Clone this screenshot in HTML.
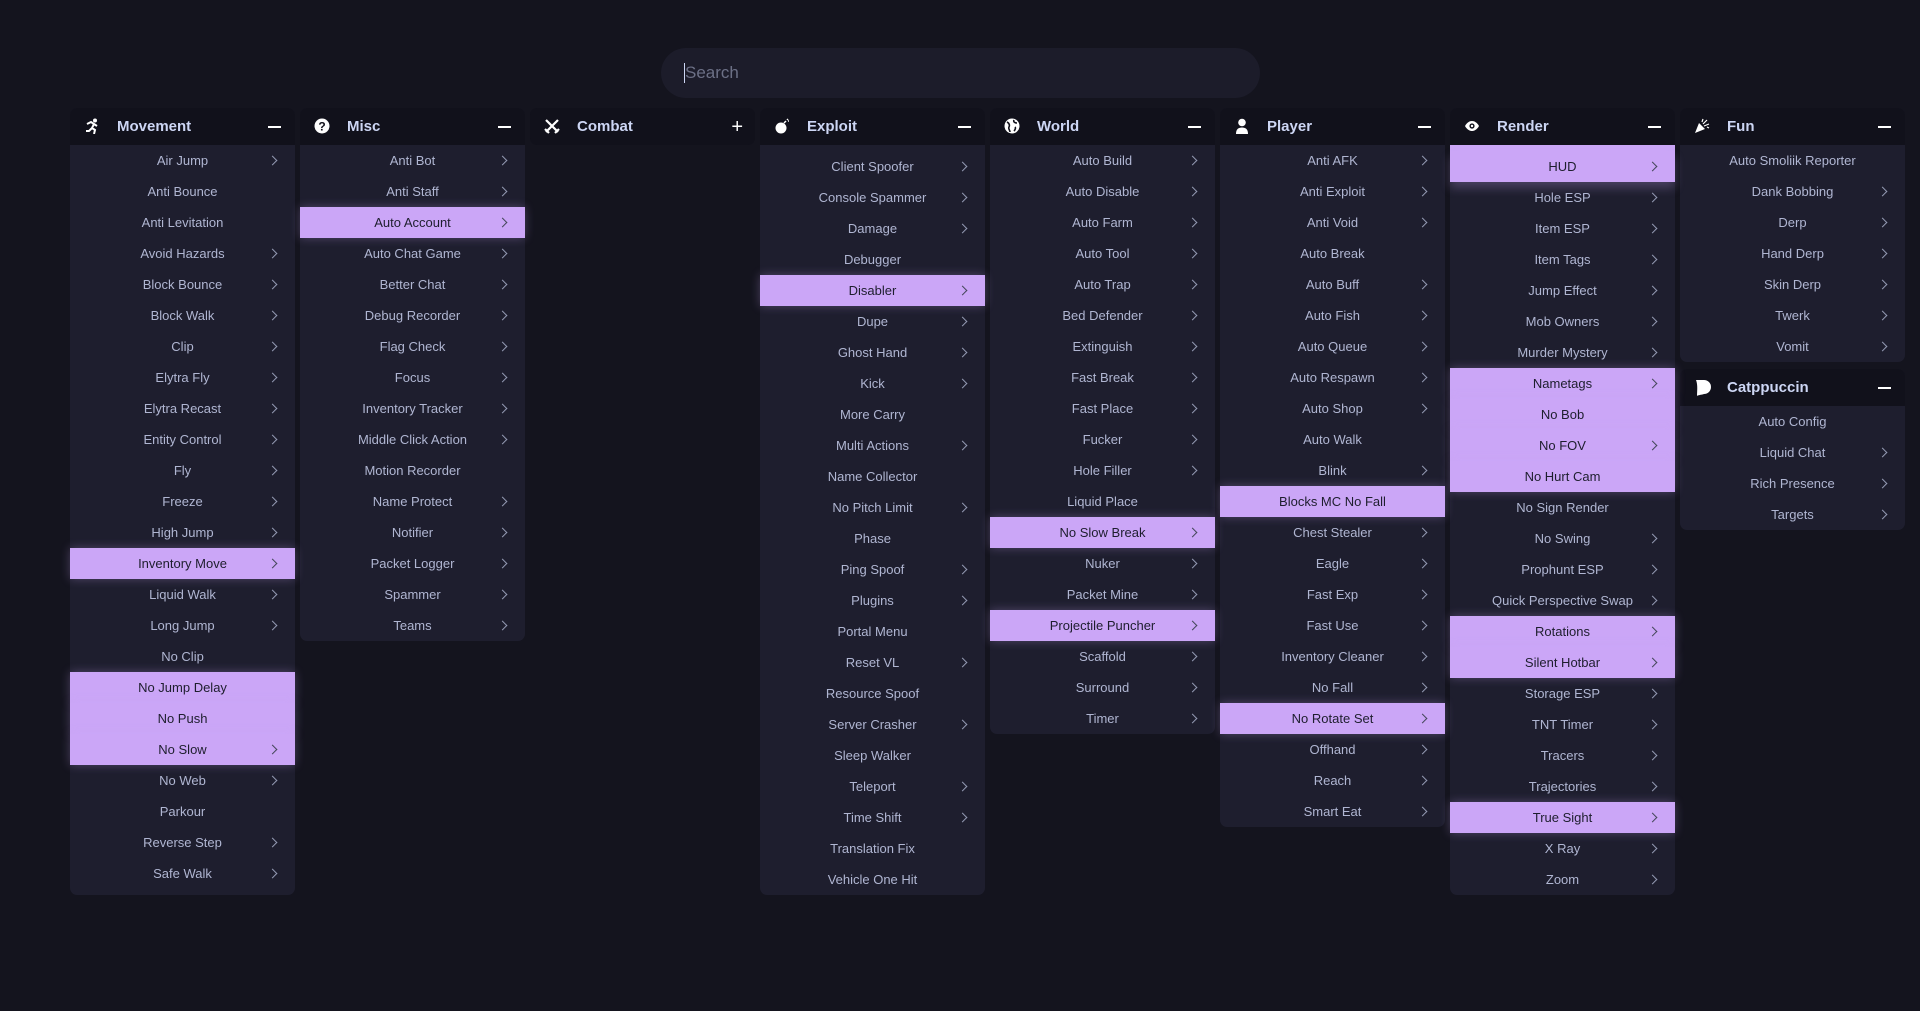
<!DOCTYPE html>
<html><head><meta charset="utf-8"><style>
*{box-sizing:border-box;margin:0;padding:0}
body{width:1920px;height:1011px;overflow:hidden;background:#14141e;font-family:"Liberation Sans",sans-serif;position:relative}
.search{position:absolute;left:661px;top:48px;width:599px;height:50px;border-radius:25px;background:#1c1c2a;color:#6c7086;font-size:17px;line-height:50px;padding-left:24px}
.search:before{content:"";position:absolute;left:23px;top:15px;width:1px;height:20px;background:#cdd6f4}
.p{position:absolute;top:108px;width:225px;border-radius:7px;background:#1e1e2e;overflow:visible}
.hd{height:37px;background:#11111b;border-radius:7px 7px 0 0;position:relative;color:#cdd6f4;font-weight:bold;font-size:15px;line-height:38px;padding-left:47px}
.hd svg{position:absolute;left:14px;top:10px}
.hd .m{position:absolute;right:14px;top:18px;width:13px;height:2px;background:#fff}
.hd .pl{position:absolute;right:12px;top:11px;color:#fff;font-size:20px;line-height:17px;font-weight:normal}
.i{height:31px;line-height:31px;text-align:center;color:#b0b6d2;font-size:13px;position:relative}
.a:after{content:"";position:absolute;right:19px;top:12px;width:6px;height:6px;border-right:1.5px solid #9399b2;border-top:1.5px solid #9399b2;transform:rotate(45deg)}
.h{background:#cba6f7;color:#1e1e2e;z-index:2;box-shadow:0 0 10px rgba(203,166,247,.3)}
.h.a:after{border-color:#45475a}
.pb{padding-bottom:6px}
.sp{height:6px}
.c{border-radius:7px}
.last{border-radius:0 0 7px 7px}
</style></head><body>
<div class="search">Search</div>

<div class="p pb" style="left:70px">
<div class="hd"><svg width="16" height="16" viewBox="0 0 16 16"><circle cx="11" cy="2.5" r="2" fill="#fff"/><path d="M3 6l4-2 3 2-2 4 3 2-1 4M8 10l-3 3-3 0M10 6l3 2" stroke="#fff" stroke-width="2" fill="none"/></svg>Movement<span class="m"></span></div>
<div class="i a">Air Jump</div><div class="i">Anti Bounce</div><div class="i">Anti Levitation</div><div class="i a">Avoid Hazards</div><div class="i a">Block Bounce</div><div class="i a">Block Walk</div><div class="i a">Clip</div><div class="i a">Elytra Fly</div><div class="i a">Elytra Recast</div><div class="i a">Entity Control</div><div class="i a">Fly</div><div class="i a">Freeze</div><div class="i a">High Jump</div><div class="i a h">Inventory Move</div><div class="i a">Liquid Walk</div><div class="i a">Long Jump</div><div class="i">No Clip</div><div class="i h">No Jump Delay</div><div class="i h">No Push</div><div class="i a h">No Slow</div><div class="i a">No Web</div><div class="i">Parkour</div><div class="i a">Reverse Step</div><div class="i a">Safe Walk</div>
</div>

<div class="p" style="left:300px">
<div class="hd"><svg width="16" height="16" viewBox="0 0 16 16"><circle cx="8" cy="8" r="7.5" fill="#fff"/><text x="8" y="12.5" text-anchor="middle" font-size="12" font-weight="bold" fill="#11111b" font-family="Liberation Sans">?</text></svg>Misc<span class="m"></span></div>
<div class="i a">Anti Bot</div><div class="i a">Anti Staff</div><div class="i a h">Auto Account</div><div class="i a">Auto Chat Game</div><div class="i a">Better Chat</div><div class="i a">Debug Recorder</div><div class="i a">Flag Check</div><div class="i a">Focus</div><div class="i a">Inventory Tracker</div><div class="i a">Middle Click Action</div><div class="i">Motion Recorder</div><div class="i a">Name Protect</div><div class="i a">Notifier</div><div class="i a">Packet Logger</div><div class="i a">Spammer</div><div class="i a last">Teams</div>
</div>

<div class="p" style="left:530px;background:none">
<div class="hd c"><svg width="16" height="16" viewBox="0 0 16 16"><path d="M2 2l12 12M14 2L2 14M1 11l4 4M15 11l-4 4" stroke="#fff" stroke-width="2.2" fill="none"/></svg>Combat<span class="pl">+</span></div>
</div>

<div class="p" style="left:760px">
<div class="hd"><svg width="16" height="16" viewBox="0 0 16 16"><circle cx="7" cy="10" r="5.5" fill="#fff"/><path d="M10 5l2-2M13 1l1 1M14 3l1 0" stroke="#fff" stroke-width="1.5"/></svg>Exploit<span class="m"></span></div>
<div class="sp"></div>
<div class="i a">Client Spoofer</div><div class="i a">Console Spammer</div><div class="i a">Damage</div><div class="i">Debugger</div><div class="i a h">Disabler</div><div class="i a">Dupe</div><div class="i a">Ghost Hand</div><div class="i a">Kick</div><div class="i">More Carry</div><div class="i a">Multi Actions</div><div class="i">Name Collector</div><div class="i a">No Pitch Limit</div><div class="i">Phase</div><div class="i a">Ping Spoof</div><div class="i a">Plugins</div><div class="i">Portal Menu</div><div class="i a">Reset VL</div><div class="i">Resource Spoof</div><div class="i a">Server Crasher</div><div class="i">Sleep Walker</div><div class="i a">Teleport</div><div class="i a">Time Shift</div><div class="i">Translation Fix</div><div class="i last">Vehicle One Hit</div>
</div>

<div class="p" style="left:990px">
<div class="hd"><svg width="16" height="16" viewBox="0 0 16 16"><circle cx="8" cy="8" r="7.5" fill="#fff"/><path d="M3 4c2 1 3 3 2 5s1 3 1 5M10 2c-1 2 1 3 3 3M11 9c1 1 0 3-1 4" stroke="#11111b" stroke-width="1.6" fill="none"/></svg>World<span class="m"></span></div>
<div class="i a">Auto Build</div><div class="i a">Auto Disable</div><div class="i a">Auto Farm</div><div class="i a">Auto Tool</div><div class="i a">Auto Trap</div><div class="i a">Bed Defender</div><div class="i a">Extinguish</div><div class="i a">Fast Break</div><div class="i a">Fast Place</div><div class="i a">Fucker</div><div class="i a">Hole Filler</div><div class="i">Liquid Place</div><div class="i a h">No Slow Break</div><div class="i a">Nuker</div><div class="i a">Packet Mine</div><div class="i a h">Projectile Puncher</div><div class="i a">Scaffold</div><div class="i a">Surround</div><div class="i a last">Timer</div>
</div>

<div class="p" style="left:1220px">
<div class="hd"><svg width="16" height="16" viewBox="0 0 16 16"><circle cx="8" cy="4.5" r="3.8" fill="#fff"/><path d="M2 16c0-5 2.5-6.5 6-6.5s6 1.5 6 6.5z" fill="#fff"/></svg>Player<span class="m"></span></div>
<div class="i a">Anti AFK</div><div class="i a">Anti Exploit</div><div class="i a">Anti Void</div><div class="i">Auto Break</div><div class="i a">Auto Buff</div><div class="i a">Auto Fish</div><div class="i a">Auto Queue</div><div class="i a">Auto Respawn</div><div class="i a">Auto Shop</div><div class="i">Auto Walk</div><div class="i a">Blink</div><div class="i h">Blocks MC No Fall</div><div class="i a">Chest Stealer</div><div class="i a">Eagle</div><div class="i a">Fast Exp</div><div class="i a">Fast Use</div><div class="i a">Inventory Cleaner</div><div class="i a">No Fall</div><div class="i a h">No Rotate Set</div><div class="i a">Offhand</div><div class="i a">Reach</div><div class="i a last">Smart Eat</div>
</div>

<div class="p" style="left:1450px">
<div class="hd"><svg width="16" height="16" viewBox="0 0 16 16"><path d="M1 8c2-3.5 4.5-5 7-5s5 1.5 7 5c-2 3.5-4.5 5-7 5S3 11.5 1 8z" fill="#fff"/><circle cx="8" cy="8" r="2.6" fill="#11111b"/><circle cx="8" cy="8" r="1.2" fill="#fff"/></svg>Render<span class="m"></span></div>
<div class="sp" style="background:#cba6f7"></div>
<div class="i a h" style="box-shadow:0 6px 10px rgba(203,166,247,.25)">HUD</div><div class="i a">Hole ESP</div><div class="i a">Item ESP</div><div class="i a">Item Tags</div><div class="i a">Jump Effect</div><div class="i a">Mob Owners</div><div class="i a">Murder Mystery</div><div class="i a h">Nametags</div><div class="i h">No Bob</div><div class="i a h">No FOV</div><div class="i h">No Hurt Cam</div><div class="i">No Sign Render</div><div class="i a">No Swing</div><div class="i a">Prophunt ESP</div><div class="i a">Quick Perspective Swap</div><div class="i a h">Rotations</div><div class="i a h">Silent Hotbar</div><div class="i a">Storage ESP</div><div class="i a">TNT Timer</div><div class="i a">Tracers</div><div class="i a">Trajectories</div><div class="i a h">True Sight</div><div class="i a">X Ray</div><div class="i a last">Zoom</div>
</div>

<div class="p" style="left:1680px">
<div class="hd"><svg width="16" height="16" viewBox="0 0 16 16"><path d="M1 15l4-10 6 6z" fill="#fff"/><path d="M9 6l4-4M10 8l5-2M8 4l1-3M13 9l2 1" stroke="#fff" stroke-width="1.2"/></svg>Fun<span class="m"></span></div>
<div class="i">Auto Smoliik Reporter</div><div class="i a">Dank Bobbing</div><div class="i a">Derp</div><div class="i a">Hand Derp</div><div class="i a">Skin Derp</div><div class="i a">Twerk</div><div class="i a last">Vomit</div>
</div>

<div class="p" style="left:1680px;top:369px">
<div class="hd"><svg width="18" height="18" viewBox="0 0 18 18"><path d="M2 1h8a7 7 0 0 1 0 14c-3 1-6 1-7 2C3 12 4 6 2 1z" fill="#fff"/></svg>Catppuccin<span class="m"></span></div>
<div class="i">Auto Config</div><div class="i a">Liquid Chat</div><div class="i a">Rich Presence</div><div class="i a last">Targets</div>
</div>
</body></html>
